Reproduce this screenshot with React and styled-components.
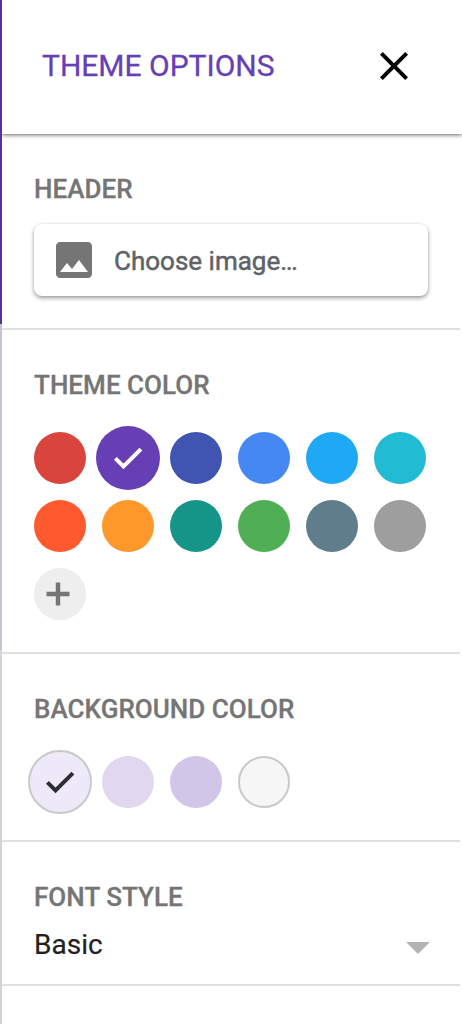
import React from "react";
import styled, { createGlobalStyle } from "styled-components";

const GlobalStyle = createGlobalStyle`
  * { box-sizing: border-box; }
  body { margin: 0; background: #fff; font-family: Roboto, "Liberation Sans", sans-serif; }
  button { font: inherit; border: 0; padding: 0; background: none; }
`;

const Page = styled.div`
  display: flex;
  width: 462px;
  height: 1024px;
  overflow: hidden;
  background: #fff;
`;

const Edge = styled.div`
  flex: none;
  width: 2px;
  background: linear-gradient(
    #54349c 0 324px,
    #c9c1d6 324px 650px,
    #d4d4d4 650px
  );
`;

const Panel = styled.aside`
  flex: 1;
  display: flex;
  flex-direction: column;
`;

const TitleBar = styled.header`
  flex: none;
  display: flex;
  align-items: center;
  justify-content: space-between;
  height: 134px;
  padding: 0 44px 2px 40px;
  box-shadow: 0 1px 4px rgba(0, 0, 0, 0.6);
  clip-path: inset(0 0 -12px 0);
`;

const Title = styled.h1`
  margin: 0;
  font-size: 30px;
  line-height: 36px;
  font-weight: 400;
  color: #673fb4;
  -webkit-text-stroke: 0.3px #673fb4;
`;

const IconButton = styled.button`
  display: flex;
  color: #000;
`;

const Section = styled.section`
  flex: none;
  width: 458px;
  height: ${(p) => p.$height}px;
  padding: ${(p) => p.$top}px 32px 0;
  border-bottom: 2px solid #e0e0e0;
`;

const Heading = styled.h2`
  margin: 0;
  font-size: 26px;
  line-height: 32px;
  font-weight: 500;
  letter-spacing: 0.04px;
  color: #757575;
  -webkit-text-stroke: 0.3px #757575;
  white-space: nowrap;
`;

const ImageButton = styled.button`
  display: flex;
  align-items: center;
  gap: 16px;
  width: 394px;
  height: 72px;
  margin-top: 19px;
  padding: 0 16px;
  border-radius: 8px;
  background: #fff;
  box-shadow: 0 2px 4px rgba(0, 0, 0, 0.4), 0 0 2px rgba(0, 0, 0, 0.08);
  color: #757575;
`;

const ImageLabel = styled.span`
  padding-top: 2px;
  font-size: 26px;
  font-weight: 400;
  color: #5f6368;
  -webkit-text-stroke: 0.5px #5f6368;
`;

const Swatches = styled.div`
  display: grid;
  grid-template-columns: repeat(6, 52px);
  grid-auto-rows: 52px;
  gap: 16px;
  margin-top: ${(p) => p.$top}px;
`;

const Swatch = styled.button`
  display: flex;
  align-items: center;
  justify-content: center;
  width: ${(p) => (p.$selected ? 64 : 52)}px;
  height: ${(p) => (p.$selected ? 64 : 52)}px;
  margin: ${(p) => (p.$selected ? "-6px" : 0)};
  border-radius: 50%;
  border: ${(p) => (p.$outlined ? "2px solid #c9c9c9" : "0")};
  background: ${(p) => p.$color};
  color: ${(p) => p.$ink || "#fff"};
`;

const Select = styled.button`
  display: flex;
  align-items: center;
  justify-content: space-between;
  width: 396px;
  height: 36px;
  margin-top: 13px;
  font-size: 28px;
  color: #212121;
  text-align: left;
`;

const SelectValue = styled.span`
  -webkit-text-stroke: 0.2px #212121;
`;

const Arrow = styled.span`
  margin-top: 7px;
  border: 12px solid transparent;
  border-top-color: #b3b3b3;
  border-bottom: 0;
`;

const CloseIcon = () => (
  <svg width="48" height="48" viewBox="0 0 24 24" fill="currentColor">
    <path d="M19 6.41L17.59 5 12 10.59 6.41 5 5 6.41 10.59 12 5 17.59 6.41 19 12 13.41 17.59 19 19 17.59 13.41 12z" />
  </svg>
);

const ImageIcon = () => (
  <svg width="48" height="48" viewBox="0 0 24 24" fill="currentColor">
    <path d="M21 19V5c0-1.1-.9-2-2-2H5c-1.1 0-2 .9-2 2v14c0 1.1.9 2 2 2h14c1.1 0 2-.9 2-2zM8.5 13.5l2.5 3.01L14.5 12l4.5 6H5l3.5-4.5z" />
  </svg>
);

const CheckIcon = () => (
  <svg width="40" height="40" viewBox="12 12 40 40" fill="none" stroke="currentColor" strokeWidth="4">
    <path d="M19.4 32.4l8.1 8.1 17.4-17.4" />
  </svg>
);

const PlusIcon = () => (
  <svg width="52" height="52" viewBox="0 0 52 52" stroke="currentColor" strokeWidth="4.4">
    <path d="M12.5 26h23M24 14.5v23" />
  </svg>
);

const themeColors = [
  "#d9453d", "#673fb4", "#4054b2", "#4688f1", "#1fa9f4", "#21bbd3",
  "#ff5930", "#ff982a", "#159588", "#50ae55", "#607d8b", "#9e9e9e",
];

const backgrounds = [
  { color: "#eee9f8", outlined: true },
  { color: "#e1d8ef" },
  { color: "#d1c5e8" },
  { color: "#f6f6f6", outlined: true },
];

export default function App() {
  return (
    <Page>
      <GlobalStyle />
      <Edge />
      <Panel>
        <TitleBar>
          <Title>THEME OPTIONS</Title>
          <IconButton aria-label="Close"><CloseIcon /></IconButton>
        </TitleBar>
        <Section $height={196} $top={39}>
          <Heading>HEADER</Heading>
          <ImageButton>
            <ImageIcon />
            <ImageLabel>Choose image…</ImageLabel>
          </ImageButton>
        </Section>
        <Section $height={324} $top={39}>
          <Heading>THEME COLOR</Heading>
          <Swatches $top={31}>
            {themeColors.map((color, i) => (
              <Swatch key={color} $color={color} $selected={i === 1}>
                {i === 1 && <CheckIcon />}
              </Swatch>
            ))}
            <Swatch $color="#eeeeee" $ink="#757575" aria-label="Add color">
              <PlusIcon />
            </Swatch>
          </Swatches>
        </Section>
        <Section $height={188} $top={39}>
          <Heading>BACKGROUND COLOR</Heading>
          <Swatches $top={31}>
            {backgrounds.map(({ color, outlined }, i) => (
              <Swatch key={color} $color={color} $outlined={outlined} $selected={i === 0} $ink="#2e2e32">
                {i === 0 && <CheckIcon />}
              </Swatch>
            ))}
          </Swatches>
        </Section>
        <Section $height={144} $top={39}>
          <Heading>FONT STYLE</Heading>
          <Select>
            <SelectValue>Basic</SelectValue>
            <Arrow />
          </Select>
        </Section>
      </Panel>
    </Page>
  );
}
